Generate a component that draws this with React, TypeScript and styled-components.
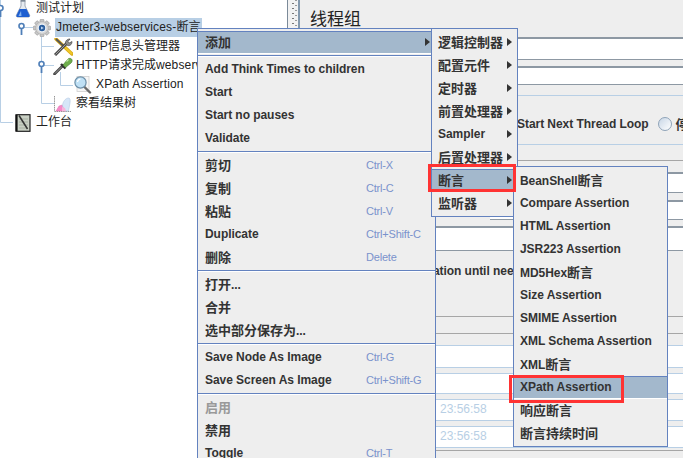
import styled, { createGlobalStyle } from "styled-components";

const FONT = `"Liberation Sans", "Noto Sans CJK SC", sans-serif`;

const GlobalStyle = createGlobalStyle`
  html, body {
    margin: 0;
    padding: 0;
    background: #eeeeee;
  }
`;

type MenuEntry =
  | { kind: "sep" }
  | {
      kind?: "item";
      label: string;
      shortcut?: string;
      arrow?: boolean;
      selected?: boolean;
      disabled?: boolean;
    };

const mainItems: MenuEntry[] = [
  { label: "添加", arrow: true, selected: true },
  { kind: "sep" },
  { label: "Add Think Times to children" },
  { label: "Start" },
  { label: "Start no pauses" },
  { label: "Validate" },
  { kind: "sep" },
  { label: "剪切", shortcut: "Ctrl-X" },
  { label: "复制", shortcut: "Ctrl-C" },
  { label: "粘贴", shortcut: "Ctrl-V" },
  { label: "Duplicate", shortcut: "Ctrl+Shift-C" },
  { label: "删除", shortcut: "Delete" },
  { kind: "sep" },
  { label: "打开..." },
  { label: "合并" },
  { label: "选中部分保存为..." },
  { kind: "sep" },
  { label: "Save Node As Image", shortcut: "Ctrl-G" },
  { label: "Save Screen As Image", shortcut: "Ctrl+Shift-G" },
  { kind: "sep" },
  { label: "启用", disabled: true },
  { label: "禁用" },
  { label: "Toggle", shortcut: "Ctrl-T" },
];

const addItems: MenuEntry[] = [
  { label: "逻辑控制器", arrow: true },
  { label: "配置元件", arrow: true },
  { label: "定时器", arrow: true },
  { label: "前置处理器", arrow: true },
  { label: "Sampler", arrow: true },
  { label: "后置处理器", arrow: true },
  { label: "断言", arrow: true, selected: true },
  { label: "监听器", arrow: true },
];

const assertionItems: MenuEntry[] = [
  { label: "BeanShell断言" },
  { label: "Compare Assertion" },
  { label: "HTML Assertion" },
  { label: "JSR223 Assertion" },
  { label: "MD5Hex断言" },
  { label: "Size Assertion" },
  { label: "SMIME Assertion" },
  { label: "XML Schema Assertion" },
  { label: "XML断言" },
  { label: "XPath Assertion", selected: true },
  { label: "响应断言" },
  { label: "断言持续时间" },
];

// Chinese runs are set a little differently from the Latin text around them
function MixedText({ text }: { text: string }) {
  const parts = text.split(/([\u4e00-\u9fff]+)/);
  return (
    <>
      {parts.map((part, i) => (i % 2 ? <Cjk key={i}>{part}</Cjk> : part))}
    </>
  );
}

function FlaskIcon() {
  return (
    <svg width="16" height="18" viewBox="0 0 16 18">
      <path d="M6 1h4v5l4.500 9c.5 1.200 0 2-1.200 2H2.700c-1.200 0-1.700-.8-1.200-2L6 6z" fill="#e6ebf0" stroke="#8a94a3" strokeWidth=".8" />
      <path d="M4.500 9h7l3 6.200c.4 1-.1 1.800-1.200 1.800H2.700c-1.100 0-1.600-.8-1.200-1.800z" fill="#1f5fd0" />
      <path d="M6 11l-2.500 5h3z" fill="#7fb0f0" />
      <rect x="5.500" y="0" width="5" height="1.500" fill="#7c8794" />
    </svg>
  );
}

function GearIcon() {
  return (
    <svg width="18" height="18" viewBox="0 0 18 18">
      <g fill="#c6c6c6" stroke="#8f8f8f" strokeWidth=".5">
        <rect x="7" y="0.300" width="4" height="17.400" rx="1" />
        <rect x="7" y="0.300" width="4" height="17.400" rx="1" transform="rotate(45 9 9)" />
        <rect x="7" y="0.300" width="4" height="17.400" rx="1" transform="rotate(90 9 9)" />
        <rect x="7" y="0.300" width="4" height="17.400" rx="1" transform="rotate(135 9 9)" />
      </g>
      <circle cx="9" cy="9" r="6.400" fill="#d6d6d6" stroke="#a0a0a0" strokeWidth=".5" />
      <circle cx="9" cy="9" r="4.400" fill="#f0f4f8" />
      <circle cx="9" cy="9" r="3.200" fill="#2c5f9e" />
      <path d="M8 7.400l2.800 1.600L8 10.600z" fill="#bcd4f0" />
    </svg>
  );
}

function ToolsIcon() {
  return (
    <svg width="20" height="18" viewBox="0 0 20 18">
      <path d="M3 1l16 15" stroke="#d8a818" strokeWidth="3.400" strokeLinecap="round" />
      <path d="M11 8.500l7.500 7" stroke="#f0c828" strokeWidth="2" strokeLinecap="round" />
      <path d="M3 1l8 7.500" stroke="#555" strokeWidth="1.800" />
      <path d="M2 17L14 5" stroke="#4a4a4a" strokeWidth="3" />
      <path d="M2.500 16.500L14 5" stroke="#a0a0a0" strokeWidth="1" />
      <path d="M13 6.500c-1.500-2.500 .5-5.500 4-5.500l-2 2.500 1.500 1.500 2.500-1.500c0 3.500-3 5.500-6 3z" fill="#8c8c8c" stroke="#444" strokeWidth=".7" />
    </svg>
  );
}

function PipetteIcon() {
  return (
    <svg width="20" height="18" viewBox="0 0 20 18">
      <path d="M1.500 17L10 8.500" stroke="#444" strokeWidth="2.600" strokeLinecap="round" />
      <path d="M2 16.500L9 9.500" stroke="#b0b0b0" strokeWidth=".8" />
      <path d="M8 7l4.500 4.500" stroke="#333" strokeWidth="2.400" />
      <path d="M10 8l4.500-5.500c1.200-1.300 3-1.500 4-.5s.8 2.800-.5 4L12.500 10.500z" fill="#6fae4c" stroke="#4c7f33" strokeWidth=".7" />
      <path d="M13.500 4.500l2-2" stroke="#c2e5a8" strokeWidth="1.200" />
    </svg>
  );
}

function MagnifierIcon() {
  return (
    <svg width="19" height="19" viewBox="0 0 19 19">
      <rect x="4" y="1.500" width="12" height="15" fill="#f6f6f6" stroke="#cfcfcf" strokeWidth=".8" />
      <path d="M11 11.500l6 6" stroke="#6b6b6b" strokeWidth="2.400" strokeLinecap="round" />
      <circle cx="7.500" cy="7.500" r="5.600" fill="#bfe0f5" stroke="#6d8fa8" strokeWidth="1.200" />
      <path d="M4.500 7c.3-1.700 1.500-2.800 3-3" stroke="#fff" strokeWidth="1.200" fill="none" />
    </svg>
  );
}

function ChartIcon() {
  return (
    <svg width="18" height="18" viewBox="0 0 18 18">
      <path d="M1.500 1v15.500H18" stroke="#8a8a8a" strokeWidth=".9" fill="none" strokeDasharray="1.500 .7" />
      <path d="M3 16l3-5 3-1 3 2 1 4z" fill="#f58ac8" stroke="#d868a8" strokeWidth=".4" />
      <path d="M12 16l-2.500-5c0-4 3-8 6-8 1.500 0 2 2 1.500 5l-1.500 8z" fill="#d6e6f8" stroke="#a8c0dc" strokeWidth=".5" />
      <path d="M9 16v-4l3 1 1 3z" fill="#f8b4dc" />
    </svg>
  );
}

function NotebookIcon() {
  return (
    <svg width="17" height="18" viewBox="1 0 17 18">
      <rect x="2" y="0.700" width="14" height="16.600" fill="#c9d0c4" stroke="#222" strokeWidth="1.200" />
      <path d="M2.600 1v16" stroke="#111" strokeWidth="2" />
      <path d="M5 5h9M5 8h9M5 11h9M5 14h9" stroke="#9aa395" strokeWidth=".7" />
      <path d="M5 1.500l8.500 13.500" stroke="#333" strokeWidth="1.500" />
    </svg>
  );
}

function TreeLines() {
  const line = "#b8cfe5";
  const handles = [
    [0, 8],
    [21, 26],
    [41, 64],
  ];
  return (
    <LinesOverlay width="110" height="130" viewBox="0 0 110 130">
      <g stroke={line} strokeWidth="1" fill="none">
        <path d="M.5 0v122.500H13" />
        <path d="M21.500 27.500H33" />
        <path d="M41.500 36v67.500H54" />
        <path d="M41.500 46.500H54" />
        <path d="M41.500 65.500H54" />
        <path d="M60.500 72v13.500H73" />
      </g>
      {handles.map(([x, y]) => (
        <g key={`${x}-${y}`}>
          <path d={`M${x + 0.5} ${y + 3}v6`} stroke="#4f7fb8" strokeWidth="1.800" />
          <circle cx={x + 0.5} cy={y} r="2.500" fill="#fff" stroke="#4f7fb8" strokeWidth="1.600" />
        </g>
      ))}
    </LinesOverlay>
  );
}

function MenuRows({ items }: { items: MenuEntry[] }) {
  return (
    <>
      {items.map((entry, i) =>
        entry.kind === "sep" ? (
          <MenuSeparator key={i} />
        ) : (
          <MenuRow key={i} $selected={entry.selected}>
            <MenuLabel $disabled={entry.disabled}>
              <MixedText text={entry.label} />
            </MenuLabel>
            {entry.shortcut && <Shortcut>{entry.shortcut}</Shortcut>}
            {entry.arrow && <Arrow />}
          </MenuRow>
        ),
      )}
    </>
  );
}

export default function App() {
  return (
    <>
      <GlobalStyle />
      <Page>
        <TreePanel>
          <TreeLines />
          <TreeRow $level={0}>
            <IconSlot $width={20}>
              <FlaskIcon />
            </IconSlot>
            <TreeLabel>
              <MixedText text="测试计划" />
            </TreeLabel>
          </TreeRow>
          <TreeRow $level={1}>
            <IconSlot $width={22}>
              <GearIcon />
            </IconSlot>
            <TreeLabel $selected>
              <MixedText text="Jmeter3-webservices-断言" />
            </TreeLabel>
          </TreeRow>
          <TreeRow $level={2}>
            <IconSlot $width={22}>
              <ToolsIcon />
            </IconSlot>
            <TreeLabel>
              <MixedText text="HTTP信息头管理器" />
            </TreeLabel>
          </TreeRow>
          <TreeRow $level={2}>
            <IconSlot $width={22}>
              <PipetteIcon />
            </IconSlot>
            <TreeLabel>
              <MixedText text="HTTP请求完成webservices" />
            </TreeLabel>
          </TreeRow>
          <TreeRow $level={3}>
            <IconSlot $width={22}>
              <MagnifierIcon />
            </IconSlot>
            <TreeLabel>
              <MixedText text="XPath Assertion" />
            </TreeLabel>
          </TreeRow>
          <TreeRow $level={2}>
            <IconSlot $width={22}>
              <ChartIcon />
            </IconSlot>
            <TreeLabel>
              <MixedText text="察看结果树" />
            </TreeLabel>
          </TreeRow>
          <TreeRow $level={0}>
            <IconSlot $width={20}>
              <NotebookIcon />
            </IconSlot>
            <TreeLabel>
              <MixedText text="工作台" />
            </TreeLabel>
          </TreeRow>
        </TreePanel>

        <Divider />

        <RightPanel>
          <Heading>线程组</Heading>
          <Field $height={23} />
          <Field $height={19} $gap={6} />
          <OptionGroup>
            <OptionText>Start Next Thread Loop</OptionText>
            <Radio />
            <OptionText>
              <MixedText text="停止线程" />
            </OptionText>
          </OptionGroup>
          <Rule $gap={15} />
          <Field $height={21} $gap={11} />
          <Field $height={20} $gap={7} $inset={190} />
          <Field $height={25} $gap={6} />
          <DelayRow>Delay Thread creation until needed</DelayRow>
          <Rule $gap={0} />
          <Rule $gap={16} />
          <TableRow $height={23} $gap={11} />
          <TableRow $height={21} $gap={5} />
          <TableRow $height={22} $gap={5}>
            23:56:58
          </TableRow>
          <TableRow $height={22} $gap={5}>
            23:56:58
          </TableRow>
          <Rule $gap={2} />
        </RightPanel>

        <Menu $left={197} $top={28} $width={239}>
          <MenuRows items={mainItems} />
        </Menu>
        <Menu $left={431} $top={28} $width={87} $indent={6}>
          <MenuRows items={addItems} />
        </Menu>
        <Menu $left={513} $top={166} $width={155} $indent={6}>
          <MenuRows items={assertionItems} />
        </Menu>

        <Callout $left={428} $top={164} $width={88} $height={28} />
        <Callout $left={509} $top={375} $width={115} $height={28} />
      </Page>
    </>
  );
}

const Page = styled.div`
  position: relative;
  display: flex;
  width: 683px;
  height: 458px;
  overflow: hidden;
  background: #eeeeee;
  font-family: ${FONT};
  color: #333333;
`;

const Cjk = styled.span`
  font-size: var(--cjk-size, 12px);
  letter-spacing: 0;
`;

// Tree
const TreePanel = styled.div`
  position: relative;
  flex: 0 0 287px;
  height: 459px;
  margin-top: -1px;
  background: #ffffff;
  overflow: hidden;
`;

const LinesOverlay = styled.svg`
  position: absolute;
  left: 0;
  top: 1px;
`;

const TreeRow = styled.div<{ $level: number }>`
  position: relative;
  display: flex;
  align-items: center;
  height: 19px;
  padding-left: ${(p) => [15, 33, 53, 73][p.$level]}px;
  white-space: nowrap;
`;

const IconSlot = styled.span<{ $width: number }>`
  display: flex;
  flex: 0 0 ${(p) => p.$width}px;
  align-items: center;
`;

const TreeLabel = styled.span<{ $selected?: boolean }>`
  display: block;
  height: 19px;
  padding: 0 2px 0 1px;
  font-size: 12px;
  line-height: 19px;
  color: #222222;
  letter-spacing: 0.15px;
  background: ${(p) => (p.$selected ? "#b8cfe5" : "transparent")};
`;

const Divider = styled.div`
  flex: 0 0 13px;
  height: 100%;
  box-sizing: border-box;
  border-left: 1px solid #7b8a99;
  border-right: 2px solid #8499ad;
  background-color: #f2f2f2;
  background-image: radial-gradient(circle, #777 0.8px, transparent 1px),
    radial-gradient(circle, #999 0.8px, transparent 1px);
  background-size: 2px 5px, 2px 5px;
  background-position: 4px 1px, 7px 3px;
  background-repeat: repeat-y;
`;

// Right panel
const RightPanel = styled.div`
  flex: 1 1 auto;
  min-width: 0;
  display: flex;
  flex-direction: column;
  overflow: hidden;
`;

const Heading = styled.div`
  flex: 0 0 37px;
  box-sizing: border-box;
  padding: 9px 0 0 10px;
  font-size: 17px;
  line-height: 22px;
  color: #222222;
`;

const Field = styled.div<{ $height: number; $gap?: number; $inset?: number }>`
  flex: 0 0 ${(p) => p.$height}px;
  box-sizing: border-box;
  margin: ${(p) => p.$gap ?? 0}px 0 0 ${(p) => p.$inset ?? 0}px;
  border-top: 2px solid #8d98a3;
  border-bottom: 1px solid #8d98a3;
  background: #ffffff;
`;

const OptionGroup = styled.div`
  flex: 0 0 50px;
  box-sizing: border-box;
  margin-top: 10px;
  display: flex;
  align-items: center;
  padding: 7px 0 0 217px;
  border-top: 1px solid #b8cfe5;
  border-bottom: 1px solid #b8cfe5;
  white-space: nowrap;
`;

const OptionText = styled.span`
  --cjk-size: 13px;
  flex: none;
  font-size: 12px;
  font-weight: 700;
  letter-spacing: -0.05px;
`;

const Radio = styled.span`
  flex: none;
  width: 12px;
  height: 12px;
  margin: 0 4px 0 9px;
  border: 1px solid #8fa3b8;
  border-radius: 50%;
  background: linear-gradient(135deg, #c8d6e6, #ffffff);
`;

const Rule = styled.div<{ $gap: number }>`
  flex: 0 0 1px;
  margin-top: ${(p) => p.$gap}px;
  background: #a6a6a6;
`;

const DelayRow = styled.div`
  flex: 0 0 65px;
  box-sizing: border-box;
  padding: 12px 0 0 37px;
  font-size: 12px;
  font-weight: 700;
  line-height: 16px;
  letter-spacing: -0.05px;
  white-space: nowrap;
`;

const TableRow = styled.div<{ $height: number; $gap: number }>`
  flex: 0 0 ${(p) => p.$height}px;
  box-sizing: border-box;
  margin-top: ${(p) => p.$gap}px;
  padding-left: 140px;
  border-top: 1px solid #b8cfe5;
  border-bottom: 1px solid #b8cfe5;
  background: #ffffff;
  font-size: 12px;
  line-height: 19px;
  color: #b8cfe5;
`;

// Popup menus
const Menu = styled.div<{ $left: number; $top: number; $width: number; $indent?: number }>`
  --indent: ${(p) => p.$indent ?? 7}px;
  --cjk-size: 13px;
  position: absolute;
  left: ${(p) => p.$left}px;
  top: ${(p) => p.$top}px;
  width: ${(p) => p.$width}px;
  box-sizing: border-box;
  padding: 2px 0 1px;
  border: 1px solid #6382bf;
  background: #eeeeee;
`;

const MenuRow = styled.div<{ $selected?: boolean }>`
  position: relative;
  display: flex;
  align-items: center;
  height: 23px;
  box-sizing: border-box;
  padding: 0 0 2px var(--indent);
  white-space: nowrap;
  background: ${(p) => (p.$selected ? "#a3b8cc" : "transparent")};
  border-top: 1px solid ${(p) => (p.$selected ? "#6382bf" : "transparent")};
  border-bottom: 1px solid ${(p) => (p.$selected ? "#ffffff" : "transparent")};
`;

const MenuLabel = styled.span<{ $disabled?: boolean }>`
  font-size: 12px;
  font-weight: 700;
  letter-spacing: -0.05px;
  color: ${(p) => (p.$disabled ? "#999999" : "#333333")};
`;

const Shortcut = styled.span`
  position: absolute;
  left: 168px;
  font-size: 11px;
  letter-spacing: -0.2px;
  color: #7a92cc;
`;

const Arrow = styled.span`
  position: absolute;
  right: 5px;
  top: 6px;
  border-style: solid;
  border-width: 4px 0 4px 5px;
  border-color: transparent transparent transparent #333333;
`;

const MenuSeparator = styled.div`
  height: 4px;
  background: linear-gradient(#eeeeee 1px, #6382bf 1px, #6382bf 2px, #ffffff 2px, #ffffff 3px, #eeeeee 3px);
`;

// Red annotation boxes drawn on top of the screenshot
const Callout = styled.div<{ $left: number; $top: number; $width: number; $height: number }>`
  position: absolute;
  left: ${(p) => p.$left}px;
  top: ${(p) => p.$top}px;
  width: ${(p) => p.$width}px;
  height: ${(p) => p.$height}px;
  box-sizing: border-box;
  border: 3px solid #ff3333;
`;
